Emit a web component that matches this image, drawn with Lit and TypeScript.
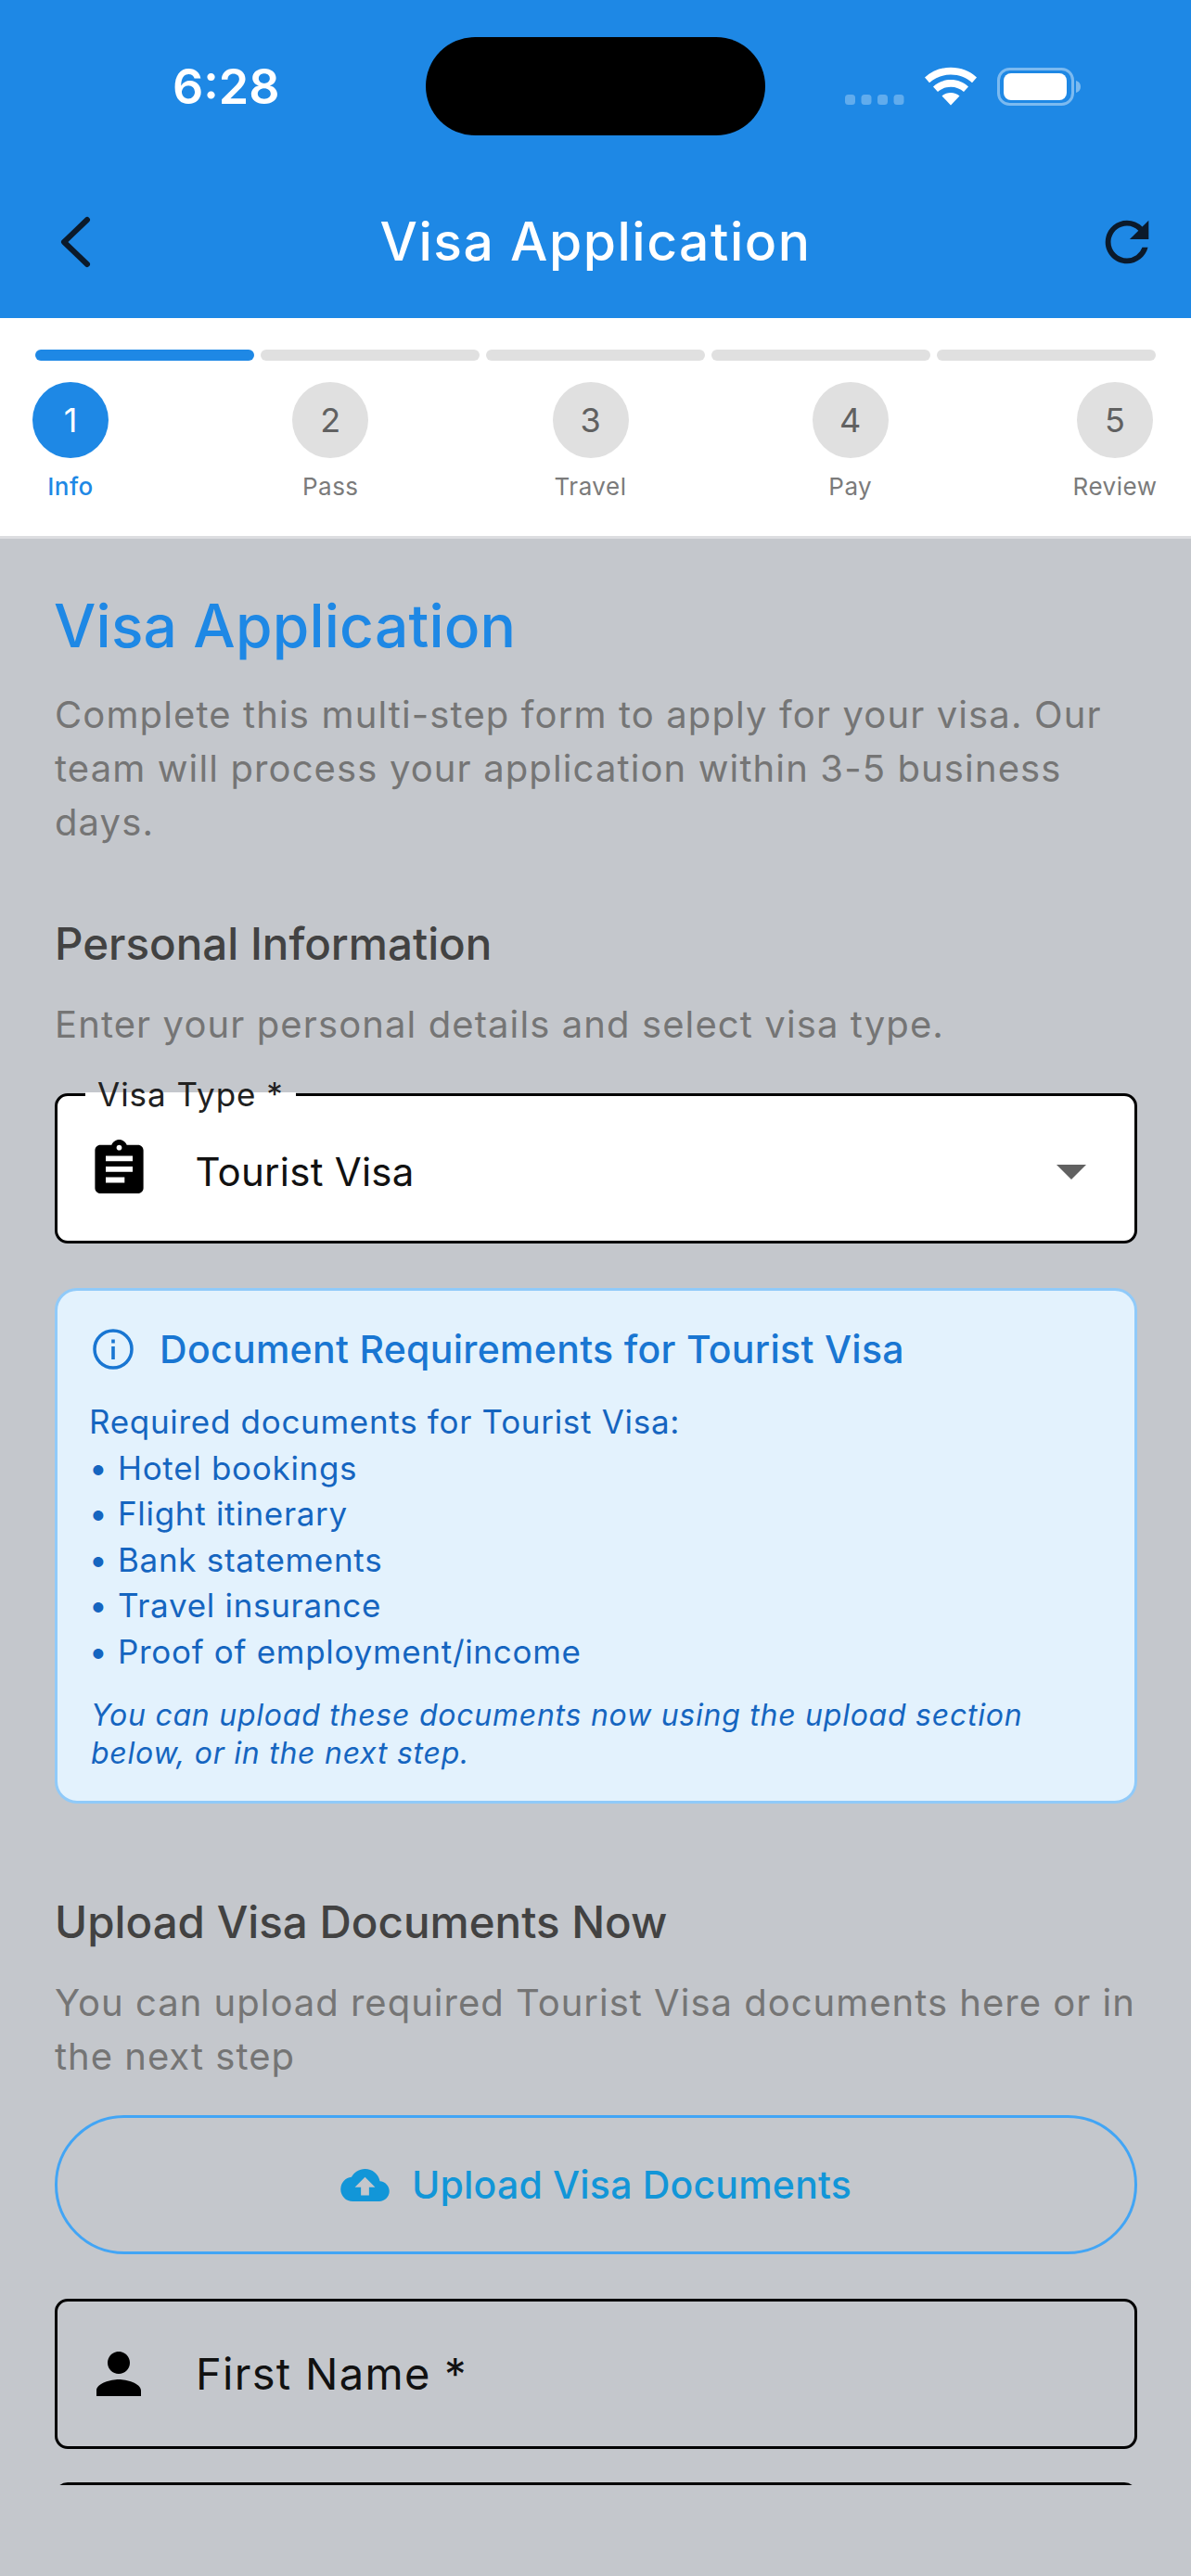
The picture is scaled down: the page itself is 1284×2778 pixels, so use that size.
import { LitElement, html, css } from "lit";
import { customElement } from "lit/decorators.js";

const STEPS = ["Info", "Pass", "Travel", "Pay", "Review"];
const SEGMENTS = [0, 1, 2, 3, 4];
const BULLETS = ["Hotel bookings", "Flight itinerary", "Bank statements", "Travel insurance", "Proof of employment/income"];

@customElement("app-root")
export class AppRoot extends LitElement {
  static styles = css`
    :host {
      display: block;
      width: 1284px;
      height: 2778px;
      overflow: hidden;
      background: #c4c7cc;
      font-family: Inter, "Liberation Sans", sans-serif;
    }
    svg { display: block; flex: none; }

    .header { height: 343px; background: #1e88e5; display: flex; flex-direction: column; }
    .status { height: 186px; position: relative; }
    .time {
      position: absolute; left: 186px; top: 63px;
      font-size: 52px; line-height: 62px; font-weight: 600; color: #fff;
    }
    .island { position: absolute; left: 459px; top: 40px; width: 366px; height: 106px; border-radius: 53px; background: #000; }
    .sys { position: absolute; left: 905px; top: 66px; }
    .appbar { height: 157px; box-sizing: border-box; display: flex; align-items: center; justify-content: space-between; padding: 0 34px 7px 52px; position: relative; }
    .appbar h1 {
      position: absolute; left: 0; right: 0; top: 42px; margin: 0; text-align: center;
      font-size: 57px; line-height: 66px; font-weight: 500; color: #fff; letter-spacing: 1.5px;
    }

    .stepper { height: 238px; box-sizing: border-box; background: #fff; border-bottom: 3px solid #dcdde0; padding-top: 34px; }
    .bars { display: flex; gap: 6.5px; padding: 0 38px; }
    .bar { flex: 1; height: 12px; border-radius: 6px; background: #e0e0e0; }
    .bar.on { background: #1e88e5; }
    .steps { display: flex; justify-content: space-between; padding: 23px 36px 0 35px; }
    .step { display: flex; flex-direction: column; align-items: center; width: 82px; }
    .step:last-child { width: 92px; }
    .circle {
      width: 82px; height: 82px; border-radius: 50%; background: #e0e0e0; color: #616161;
      display: flex; align-items: center; justify-content: center; font-size: 36px; font-weight: 400;
    }
    .step.on .circle { background: #1e88e5; color: #fff; }
    .name { margin-top: 15px; font-size: 26px; line-height: 32px; letter-spacing: 0.5px; color: #7b7b7b; white-space: nowrap; }
    .step.on .name { color: #1e88e5; font-weight: 500; }

    .content { height: 2099px; overflow: hidden; padding: 0 58px 0 59px; }
    h2 { margin: 56px 0 0 -1px; font-size: 64px; line-height: 76px; font-weight: 500; color: #1e88e5; letter-spacing: 0.2px; }
    .desc { margin: 29px 0 0; font-size: 40px; line-height: 58px; letter-spacing: 1.12px; color: #757575; }
    h3 { margin: 0; font-size: 47.5px; line-height: 58px; font-weight: 500; color: #424242; }
    .h-personal { margin-top: 73px; }
    .sub { margin: 29px 0 0; font-size: 40px; line-height: 58px; letter-spacing: 1.1px; color: #757575; }
    .h-upload { margin-top: 99px; }
    .sub.tight { margin-top: 29px; letter-spacing: 1px; }

    .field {
      position: relative; box-sizing: border-box; height: 162px; border: 3.5px solid #000; border-radius: 14px;
      display: flex; align-items: center; padding: 0 0 0 39.5px; color: #000;
    }
    .select { margin-top: 45px; background: #fff; padding-top: 8px; }
    .clip { margin-bottom: 13px; }
    .legend {
      position: absolute; left: 30px; top: -24px; padding: 0 13px;
      font-size: 35px; line-height: 44px; letter-spacing: 1px; color: #212121;
      background: linear-gradient(to bottom, transparent 46%, #fff 46%);
    }
    .value { margin-left: 56px; font-size: 42px; line-height: 50px; color: #111; letter-spacing: 0.25px; }
    .caret { margin-left: auto; margin-right: 52px; }

    .info {
      margin-top: 48px; box-sizing: border-box; height: 556px; border: 3px solid #90caf9; border-radius: 24px;
      background: #e3f2fd; padding: 38px 36px 0 36px; color: #1565c0;
    }
    .info-head { display: flex; align-items: center; gap: 26px; margin-left: 2px; }
    .info-title { font-size: 41px; line-height: 50px; font-weight: 500; color: #1976d2; letter-spacing: 0.3px; margin-left: 2px; }
    .list { margin: 29px 0 0 -2px; font-size: 35px; line-height: 49.5px; letter-spacing: 0.7px; }
    .note { margin-top: 23px; font-size: 32px; line-height: 41px; font-style: italic; letter-spacing: 0.75px; }

    .upload {
      margin-top: 34px; box-sizing: border-box; height: 150px; border: 3px solid #42a5f5; border-radius: 75px;
      display: flex; align-items: center; justify-content: center; gap: 24px;
      font-size: 41px; font-weight: 500; color: #1296d8; letter-spacing: 0.2px;
    }
    .name-field { margin-top: 48px; padding-left: 42px; }
    .name-field .value { font-size: 47px; margin-left: 59px; letter-spacing: 1.3px; }
    .next { margin-top: 36px; }
  `;

  render() {
    return html`
      <div class="header">
        <div class="status">
          <div class="time">6:28</div>
          <div class="island"></div>
          <svg class="sys" width="265" height="52" viewBox="0 0 265 52">
            <g fill="#fff" fill-opacity=".3">
              <rect x="6" y="36" width="11" height="11" rx="3.5"/>
              <rect x="23.5" y="36" width="11" height="11" rx="3.5"/>
              <rect x="41" y="36" width="11" height="11" rx="3.5"/>
              <rect x="58.5" y="36" width="11" height="11" rx="3.5"/>
            </g>
            <g fill="#fff">
              <path d="M92 17.5C99.500 10.500 109 6.800 120 6.800s20.500 3.700 28 10.700l-5 5.800C137 17.600 129 14.600 120 14.600s-17 3-23 8.700z"/>
              <path d="M101 27.500c5-4.800 11.600-7.400 19-7.400s14 2.600 19 7.400l-5 5.600c-3.700-3.400-8.600-5.300-14-5.300s-10.300 1.900-14 5.300z"/>
              <path d="M110.500 37.500c2.500-2.300 5.800-3.600 9.500-3.600s7 1.300 9.500 3.600L120 47.500z"/>
            </g>
            <rect x="171.5" y="8.5" width="80" height="38" rx="12" fill="none" stroke="#fff" stroke-opacity=".42" stroke-width="3"/>
            <rect x="177" y="13" width="68" height="29" rx="8" fill="#fff"/>
            <path d="M255 21c3.500 1 5 3.500 5 6.500s-1.500 5.500-5 6.500z" fill="#fff" fill-opacity=".42"/>
          </svg>
        </div>
        <div class="appbar">
          <svg width="54" height="64" viewBox="0 0 54 64">
            <path d="M42 8 L17 32 L42 56" fill="none" stroke="#0b1a2b" stroke-width="6" stroke-linecap="round" stroke-linejoin="round"/>
          </svg>
          <h1>Visa Application</h1>
          <svg width="70" height="70" viewBox="0 0 24 24">
            <path fill="#0b1a2b" d="M17.650 6.350A7.958 7.958 0 0 0 12 4c-4.420 0-7.990 3.580-7.990 8s3.570 8 7.990 8c3.730 0 6.840-2.550 7.730-6h-2.080A5.990 5.990 0 0 1 12 18c-3.310 0-6-2.690-6-6s2.690-6 6-6c1.660 0 3.140.690 4.220 1.780L13 11h7V4l-2.350 2.350z"/>
          </svg>
        </div>
      </div>

      <div class="stepper">
        <div class="bars">
          ${SEGMENTS.map((i) => html`<div class="bar ${i === 0 ? "on" : ""}"></div>`)}
        </div>
        <div class="steps">
          ${STEPS.map((s, i) => html`
            <div class="step ${i === 0 ? "on" : ""}">
              <div class="circle">${i + 1}</div>
              <div class="name">${s}</div>
            </div>`)}
        </div>
      </div>

      <div class="content">
        <h2>Visa Application</h2>
        <p class="desc">Complete this multi-step form to apply for your visa. Our team will process your application within 3-5 business days.</p>

        <h3 class="h-personal">Personal Information</h3>
        <p class="sub">Enter your personal details and select visa type.</p>

        <div class="field select">
          <svg class="clip" width="53" height="58" viewBox="3 1 18 20">
            <path fill="#000" d="M19 3h-4.180C14.400 1.840 13.300 1 12 1s-2.400.84-2.820 2H5c-1.100 0-2 .9-2 2v14c0 1.100.9 2 2 2h14c1.100 0 2-.9 2-2V5c0-1.100-.9-2-2-2zm-7 0c.55 0 1 .45 1 1s-.45 1-1 1-1-.45-1-1 .45-1 1-1zm-5 4h10v2H7zm0 4h10v2H7zm0 4h7v2H7z"/>
          </svg>
          <span class="legend">Visa Type *</span>
          <span class="value">Tourist Visa</span>
          <svg class="caret" width="32" height="16" viewBox="0 0 32 16"><path d="M0 0h32L16 16z" fill="#616161"/></svg>
        </div>

        <div class="info">
          <div class="info-head">
            <svg width="44" height="44" viewBox="0 0 44 44">
              <circle cx="22" cy="22" r="20" fill="none" stroke="#1976d2" stroke-width="3.5"/>
              <rect x="20.200" y="19" width="3.600" height="14" fill="#1976d2"/>
              <rect x="20.200" y="11.500" width="3.600" height="4" fill="#1976d2"/>
            </svg>
            <span class="info-title">Document Requirements for Tourist Visa</span>
          </div>
          <div class="list">
            <div>Required documents for Tourist Visa:</div>
            ${BULLETS.map((b) => html`<div>• ${b}</div>`)}
          </div>
          <div class="note">You can upload these documents now using the upload section below, or in the next step.</div>
        </div>

        <h3 class="h-upload">Upload Visa Documents Now</h3>
        <p class="sub tight">You can upload required Tourist Visa documents here or in the next step</p>

        <div class="upload">
          <svg width="53" height="35" viewBox="0 4 24 16">
            <path fill="#1296d8" d="M19.350 10.040A7.490 7.490 0 0 0 12 4C9.110 4 6.600 5.640 5.350 8.040A5.994 5.994 0 0 0 0 14c0 3.310 2.690 6 6 6h13c2.760 0 5-2.240 5-5 0-2.640-2.050-4.780-4.650-4.960zM14 13v4h-4v-4H7l5-5 5 5h-3z"/>
          </svg>
          <span>Upload Visa Documents</span>
        </div>

        <div class="field name-field">
          <svg width="48" height="48" viewBox="4 4 16 16">
            <path fill="#000" d="M12 12c2.210 0 4-1.790 4-4s-1.790-4-4-4-4 1.790-4 4 1.790 4 4 4zm0 2c-2.670 0-8 1.340-8 4v2h16v-2c0-2.660-5.330-4-8-4z"/>
          </svg>
          <span class="value">First Name *</span>
        </div>
        <div class="field next"></div>
      </div>
    `;
  }
}
